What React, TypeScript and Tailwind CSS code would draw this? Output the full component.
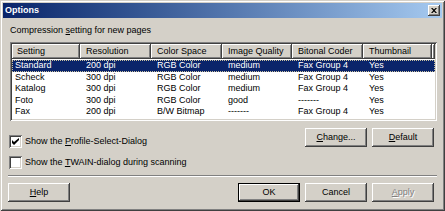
import React from "react"

const columns = [
  { label: "Setting", w: "w-[68px]" },
  { label: "Resolution", w: "w-[71px]" },
  { label: "Color Space", w: "w-[71px]" },
  { label: "Image Quality", w: "w-[70px]" },
  { label: "Bitonal Coder", w: "w-[71px]" },
  { label: "Thumbnail", w: "w-[69px]" },
]

const rows = [
  ["Standard", "200 dpi", "RGB Color", "medium", "Fax Group 4", "Yes"],
  ["Scheck", "300 dpi", "RGB Color", "medium", "Fax Group 4", "Yes"],
  ["Katalog", "300 dpi", "RGB Color", "medium", "Fax Group 4", "Yes"],
  ["Foto", "300 dpi", "RGB Color", "good", "-------", "Yes"],
  ["Fax", "200 dpi", "B/W Bitmap", "-------", "Fax Group 4", "Yes"],
]

const raised =
  "bg-[#d4d0c8] shadow-[inset_-1px_-1px_#404040,inset_1px_1px_#ffffff,inset_-2px_-2px_#808080,inset_2px_2px_#d4d0c8]"

function Button({ children, isDefault, disabled }: { children: React.ReactNode; isDefault?: boolean; disabled?: boolean }) {
  if (isDefault) {
    return (
      <div className="w-[62px] h-[19px] border border-black">
        <div className={`${raised} w-full h-full flex items-center justify-center`}>{children}</div>
      </div>
    )
  }
  return (
    <div
      className={`${raised} w-[62px] h-[19px] flex items-center justify-center ${
        disabled ? "text-[#808080] [text-shadow:1px_1px_#ffffff]" : ""
      }`}
    >
      {children}
    </div>
  )
}

function Checkbox({ checked }: { checked?: boolean }) {
  return (
    <div className="w-[13px] h-[13px] bg-white shadow-[inset_1px_1px_#808080,inset_-1px_-1px_#ffffff,inset_2px_2px_#404040,inset_-2px_-2px_#d4d0c8] flex items-center justify-center">
      {checked && (
        <svg width="7" height="7" viewBox="0 0 7 7">
          <path d="M0 2v3l2 2l5-5v-2l-5 4z" fill="#000" />
        </svg>
      )}
    </div>
  )
}

export default function App() {
  return (
    <div className="w-[445px] h-[211px] bg-[#d4d0c8] p-[3px] flex flex-col text-[9px] text-black font-['Liberation_Sans',Arial,sans-serif] shadow-[inset_1px_1px_#d4d0c8,inset_-1px_-1px_#404040,inset_2px_2px_#ffffff,inset_-2px_-2px_#808080]">
      {/* Title bar */}
      <div className="h-[15px] bg-gradient-to-r from-[#0a246a] to-[#a6caf0] flex items-center justify-between pl-[2px] pr-[2px]">
        <span className="font-bold text-white leading-none">Options</span>
        <div className={`${raised} w-[12px] h-[11px] flex items-center justify-center`}>
          <svg width="6" height="5" viewBox="0 0 6 5">
            <path d="M0 0h1.5l1.5 1.5l1.5-1.5h1.5l-2.2 2.5l2.2 2.5h-1.5l-1.5-1.5l-1.5 1.5h-1.5l2.2-2.5z" fill="#000" />
          </svg>
        </div>
      </div>

      <div className="flex-1 flex flex-col px-[5px]">
        <div className="mt-[6px] ml-[2px] leading-[13px]">
          Compression <u>s</u>etting for new pages
        </div>

        {/* List view */}
        <div className="mt-[5px] ml-[2px] h-[79px] bg-white p-[2px] shadow-[inset_1px_1px_#808080,inset_-1px_-1px_#ffffff,inset_2px_2px_#404040,inset_-2px_-2px_#d4d0c8]">
          <div className="flex h-[15px]">
            {columns.map((c, i) => (
              <div key={c.label} className={`${raised} ${c.w} h-full flex items-center ${i === 0 ? "pl-[5px]" : "pl-[6px]"} leading-none`}>
                {c.label}
              </div>
            ))}
            <div className={`${raised} flex-1 h-full`} />
          </div>
          <div className="mt-[1px]">
            {rows.map((r, ri) => (
              <div
                key={r[0]}
                className={`flex h-[11.5px] leading-[11.5px] ${
                  ri === 0 ? "bg-[#0a246a] text-white outline outline-1 outline-dotted outline-[#c8c0a0] -outline-offset-1" : ""
                }`}
              >
                {r.map((cell, ci) => (
                  <div key={ci} className={`${columns[ci].w} ${ci === 0 ? "pl-[3px]" : "pl-[6px]"} whitespace-nowrap`}>
                    {cell}
                  </div>
                ))}
              </div>
            ))}
          </div>
        </div>

        {/* Options */}
        <div className="flex justify-between">
          <div className="flex flex-col gap-[7px] mt-[13px] ml-[1px]">
            <div className="flex items-center gap-[3px] h-[14px]">
              <Checkbox checked />
              <span className="leading-none">
                Show the <u>P</u>rofile-Select-Dialog
              </span>
            </div>
            <div className="flex items-center gap-[3px] h-[14px]">
              <Checkbox />
              <span className="leading-none">
                Show the <u>T</u>WAIN-dialog during scanning
              </span>
            </div>
          </div>
          <div className="flex gap-[5px] mt-[7px] pr-[3px] h-[19px]">
            <Button>
              <u>C</u>hange...
            </Button>
            <Button>
              <u>D</u>efault
            </Button>
          </div>
        </div>

        <div className="mt-[6px] border-t border-t-[#808080] border-b border-b-white" />

        <div className="mt-[6px] flex justify-between pr-[3px]">
          <Button>
            <u>H</u>elp
          </Button>
          <div className="flex gap-[5px]">
            <Button isDefault>OK</Button>
            <Button>Cancel</Button>
            <Button disabled>
              <u>A</u>pply
            </Button>
          </div>
        </div>
      </div>
    </div>
  )
}
